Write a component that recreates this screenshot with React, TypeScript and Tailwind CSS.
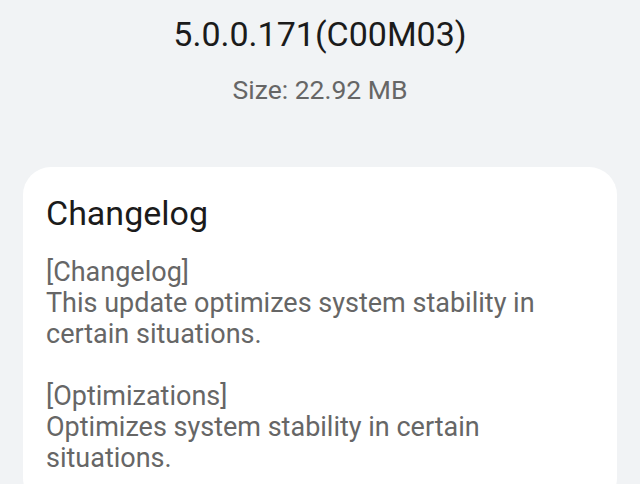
export default function App() {
  return (
    <div className="min-h-[484px] h-[484px] overflow-hidden bg-[#f1f3f5] font-['Roboto',sans-serif]">
      <div className="flex flex-col items-center pt-[14px]">
        <div className="text-[34px] leading-[40px] text-[#1b1b1b]">5.0.0.171(C00M03)</div>
        <div className="mt-[20px] text-[26.5px] leading-[32px] text-[#666666]">Size: 22.92 MB</div>
      </div>
      <div className="mx-[23px] mt-[61px] rounded-[28px] bg-white px-[23px] pt-[26px] pb-8">
        <div className="text-[34px] leading-[40px] text-[#1b1b1b]">Changelog</div>
        <div className="mt-[24px] text-[27px] leading-[31px] text-[#666666]">
          <p>[Changelog]</p>
          <p>This update optimizes system stability in certain situations.</p>
          <p className="mt-[31px]">[Optimizations]</p>
          <p>Optimizes system stability in certain situations.</p>
        </div>
      </div>
    </div>
  );
}
